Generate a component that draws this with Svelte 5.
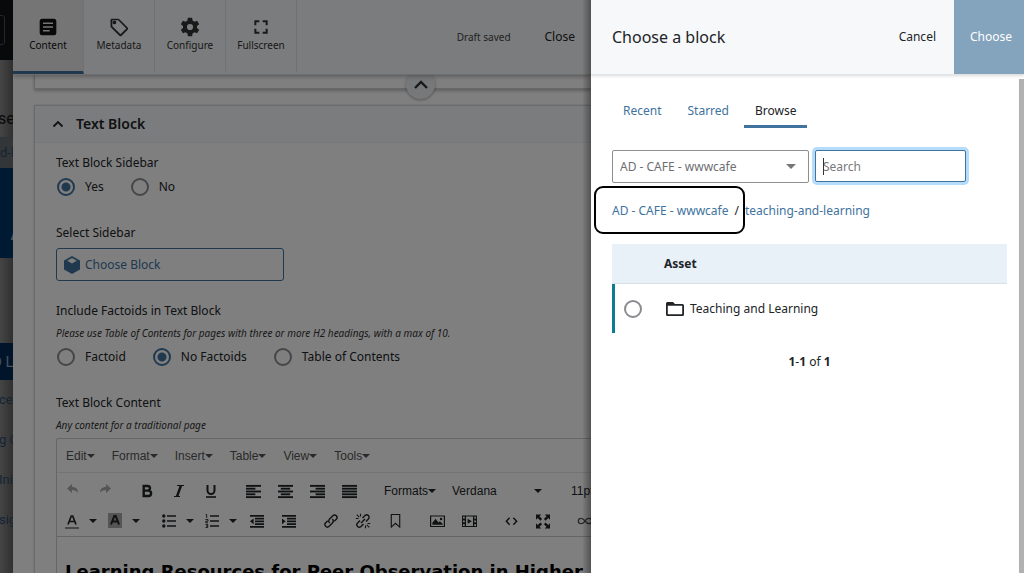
<script>
  const tabs = ['Content', 'Metadata', 'Configure', 'Fullscreen'];
  const menus = ['Edit', 'Format', 'Insert', 'Table', 'View', 'Tools'];
  const lines = {
    left: [16, 10, 16, 10, 16],
    center: [16, 10, 16, 10, 16],
    right: [16, 10, 16, 10, 16],
    full: [16, 16, 16, 16, 16]
  };
  const start = (kind, w) => (kind === 'right' ? 16 - w : kind === 'center' ? (16 - w) / 2 : 0);
  let sidebar = $state('Yes');
  let factoid = $state('No Factoids');
  let search = $state('');
</script>

<div class="app">
  <aside class="site">
    <div class="dark"><span></span></div>
    <div class="title">se</div>
    <div class="path">d-l</div>
    <div class="hero">A</div>
    <div class="space"></div>
    <div class="current">D L</div>
    <div class="link">ces</div>
    <div class="link">g C</div>
    <div class="link">Ini</div>
    <div class="link">sig</div>
  </aside>

  <main class="editor">
    <header class="bar">
      <nav class="tabs">
        {#each tabs as tab, i}
          <button class="tab" class:active={i === 0}>
            <svg width="20" height="20" viewBox="0 0 24 24" fill="currentColor" aria-hidden="true">
              {#if i === 0}
                <path d="M19 2H5a3 3 0 0 0-3 3v14a3 3 0 0 0 3 3h14a3 3 0 0 0 3-3V5a3 3 0 0 0-3-3zm-5 15.500H6v-2h8zm4-4.500H6v-2h12zm0-4.500H6v-2h12z" />
              {:else if i === 1}
                <path d="M22.400 12.600l-10-10A2 2 0 0 0 11 2H3.500A1.700 1.700 0 0 0 1.800 3.700V11c0 .6.200 1.100.6 1.500l10 10a2 2 0 0 0 2.800 0l7.200-7.100a2 2 0 0 0 0-2.800zM13.800 20.800L4 11V4h7l9.800 9.800z" />
                <circle cx="6.500" cy="6.500" r="2.200" />
              {:else if i === 2}
                <path fill-rule="evenodd" d="M9.500 1h5l.6 3.300 2.200 1.300 3.200-1.200 2.500 4.300-2.600 2.200v2.200l2.600 2.200-2.500 4.300-3.200-1.200-2.200 1.300-.6 3.300h-5l-.6-3.300-2.200-1.300-3.200 1.200L1 15.300l2.600-2.200v-2.200L1 8.700l2.500-4.300 3.200 1.200 2.200-1.300zM12 8.300a3.700 3.700 0 1 0 0 7.400 3.700 3.700 0 0 0 0-7.400z" />
              {:else}
                <path d="M4 4h6v2.400H6.400V10H4zM14 4h6v6h-2.400V6.400H14zM4 14h2.400v3.600H10V20H4zM17.600 14H20v6h-6v-2.400h3.600z" />
              {/if}
            </svg>
            {tab}
          </button>
        {/each}
      </nav>
      <span class="status">Draft saved</span>
      <button class="close">Close</button>
    </header>

    <div class="body">
      <div class="previous"></div>
      <button class="up" aria-label="Scroll up">
        <svg width="16" height="16" viewBox="0 0 16 16" fill="none" stroke="currentColor" stroke-width="2.400"><path d="M2 11l6-6 6 6" /></svg>
      </button>

      <section class="card">
        <h2>
          <svg width="12" height="12" viewBox="0 0 12 12" fill="none" stroke="currentColor" stroke-width="1.800" aria-hidden="true"><path d="M1.500 8.500L6 4l4.500 4.500" /></svg>
          Text Block
        </h2>
        <div class="fields">
          <fieldset>
            <legend>Text Block Sidebar</legend>
            <div class="radios">
              {#each ['Yes', 'No'] as option}
                <label><input type="radio" name="sidebar" value={option} bind:group={sidebar} />{option}</label>
              {/each}
            </div>
          </fieldset>
          <div class="chooser-field">
            <label for="block">Select Sidebar</label>
            <button class="choose-block" id="block">
              <svg width="16" height="18" viewBox="0 0 16 18" fill="currentColor" aria-hidden="true"><path fill-rule="evenodd" d="M8 0l8 4.500v9L8 18l-8-4.500v-9zM8 2L3.200 4.700 8 7.400l4.800-2.700z" /></svg>
              Choose Block
            </button>
          </div>
          <fieldset>
            <legend>Include Factoids in Text Block</legend>
            <p class="help">Please use Table of Contents for pages with three or more H2 headings, with a max of 10.</p>
            <div class="radios">
              {#each ['Factoid', 'No Factoids', 'Table of Contents'] as option}
                <label><input type="radio" name="factoid" value={option} bind:group={factoid} />{option}</label>
              {/each}
            </div>
          </fieldset>
          <div>
            <div class="label">Text Block Content</div>
            <p class="help">Any content for a traditional page</p>
            <div class="rich">
              <div class="menus">
                {#each menus as menu}<button>{menu}<i class="caret"></i></button>{/each}
              </div>
              <div class="tools">
                <div class="row">
                  <button class="tool muted" aria-label="Undo"><svg width="12" height="14" viewBox="0 0 12 14" fill="currentColor"><path d="M5 0v3c4 0 6 2 6 6-1-2-3-3-6-3v3L0 4.500z" /></svg></button>
                  <button class="tool muted after" aria-label="Redo"><svg width="12" height="14" viewBox="0 0 12 14" fill="currentColor"><path d="M7 0v3C3 3 1 5 1 9c1-2 3-3 6-3v3l5-4.500z" /></svg></button>
                  <button class="tool" aria-label="Bold"><svg width="16" height="16" viewBox="0 0 16 16" fill="none" stroke="currentColor" stroke-width="2.400"><path d="M4.700 3h4a2.200 2.200 0 0 1 0 4.600h-4zM4.700 7.600h4.700a2.700 2.700 0 0 1 0 5.400H4.700z" /></svg></button>
                  <button class="tool" aria-label="Italic"><svg width="16" height="16" viewBox="0 0 16 16" fill="none" stroke="currentColor"><path d="M6 2.500h7M3 13.500h6" stroke-width="1.200" /><path d="M10 2.500L6 13.500" stroke-width="2.400" /></svg></button>
                  <button class="tool after" aria-label="Underline"><svg width="16" height="16" viewBox="0 0 16 16" fill="none" stroke="currentColor"><path d="M4.500 2v5.500a3.500 3.500 0 0 0 7 0V2" stroke-width="2" /><path d="M3 14h10" stroke-width="1.600" /></svg></button>
                  {#each Object.entries(lines) as [kind, widths]}
                    <button class="tool" class:after={kind === 'full'} aria-label="Align {kind}">
                      <svg width="15" height="15" viewBox="0 0 16 16" fill="currentColor">
                        {#each widths as w, i}<rect x={start(kind, w)} y={1 + i * 3} width={w} height="2" />{/each}
                      </svg>
                    </button>
                  {/each}
                  <button class="drop formats">Formats<i class="caret"></i></button>
                  <button class="drop family">Verdana<i class="caret"></i></button>
                  <button class="drop">11pt<i class="caret"></i></button>
                </div>
                <div class="row">
                  <button class="tool split" aria-label="Text colour"><svg width="14" height="16" viewBox="0 0 14 16" fill="none" stroke="currentColor"><path d="M3 11.500L6.300 3h1.400L11 11.500M4.300 8.500h5.400" stroke-width="1.700" /><path d="M0 15h14" /></svg><i class="caret"></i></button>
                  <button class="tool split back" aria-label="Background colour"><svg width="14" height="16" viewBox="0 0 14 16" fill="none" stroke="currentColor"><path fill="#aaa" stroke="none" d="M0 0h14v15H0z" /><path d="M3 11.500L6.300 3h1.400L11 11.500M4.300 8.500h5.400" stroke-width="2" /></svg><i class="caret"></i></button>
                  <button class="tool split" aria-label="Bullet list"><svg width="14" height="16" viewBox="0 0 14 16" fill="currentColor"><circle cx="1.800" cy="3" r="1.700" /><circle cx="1.800" cy="8" r="1.700" /><circle cx="1.800" cy="13" r="1.700" /><path d="M5 2.200h9v1.600H5zM5 7.200h9v1.600H5zM5 12.200h9v1.600H5z" /></svg><i class="caret"></i></button>
                  <button class="tool split last" aria-label="Numbered list"><svg width="14" height="16" viewBox="0 0 14 16" fill="none" stroke="currentColor"><path d="M5 3h9M5 8h9M5 13h9" stroke-width="1.600" /><path d="M.7 1.500h1V5M.5 6.500H3v1.700H.800v1.600H3M.5 11.500h2.200v3H.500M1 13h2" stroke-width=".9" /></svg><i class="caret"></i></button>
                  {#each [false, true] as inward}
                    <button class="tool" class:after={inward} aria-label={inward ? 'Increase indent' : 'Decrease indent'}>
                      <svg width="14" height="16" viewBox="0 0 14 16" fill="currentColor"><path d="M0 2h14v1.700H0zM5 4.800h9v1.700H5zM5 7.500h9v1.700H5zM5 10.200h9v1.700H5zM0 13h14v1.700H0z" /><path d={inward ? 'M0 5.500l3.600 2.800L0 11.200z' : 'M3.600 5.500L0 8.300l3.600 2.900z'} /></svg>
                    </button>
                  {/each}
                  <button class="tool" aria-label="Insert link"><svg width="16" height="16" viewBox="0 0 16 16" fill="none" stroke="currentColor" stroke-width="1.400"><path d="M6.700 9.900a2.600 2.600 0 0 1-.3-3.700l3.400-3.500a2.400 2.400 0 0 1 3.500 3.500l-2.100 2.100M9.300 6.100a2.600 2.600 0 0 1 .3 3.700l-3.400 3.500a2.400 2.400 0 0 1-3.500-3.500l2.100-2.100" /></svg></button>
                  <button class="tool" aria-label="Remove link"><svg width="16" height="16" viewBox="0 0 16 16" fill="none" stroke="currentColor" stroke-width="1.400"><path d="M7.500 5l2.500-2.400a2.400 2.400 0 0 1 3.400 3.400L11 8.500M8.500 11L6 13.400a2.400 2.400 0 0 1-3.400-3.400L5 7.500M6 10l4-4" /><path d="M5.500.8v2.700M.8 5.500h2.700M1.700 1.700l2.500 2.500M10.500 12.500v2.700M12.500 10.500h2.700M11.800 11.800l2.500 2.500" stroke-width="1.100" /></svg></button>
                  <button class="tool after" aria-label="Anchor"><svg width="15" height="16" viewBox="0 0 16 16" fill="none" stroke="currentColor" stroke-width="1.200"><path d="M3.500 1.100h9v13.400L8 10.500l-4.500 4z" /></svg></button>
                  <button class="tool" aria-label="Image"><svg width="15" height="16" viewBox="0 0 16 16" fill="currentColor"><path fill-rule="evenodd" d="M0 2h16v12.500H0zM1.300 3.300v9.900h13.400V3.300z" /><path d="M2.500 12V9.800L6 5.500l3 4 1.500-1.300L13.500 11v1z" /><circle cx="11.800" cy="5.800" r="1.300" /></svg></button>
                  <button class="tool after" aria-label="Media"><svg width="15" height="16" viewBox="0 0 16 16" fill="currentColor"><path fill-rule="evenodd" d="M0 2h16v12.500H0zM4.300 3.300v9.900h7.400V3.300zM1 3.500v1.700h2V3.500zm0 4v1.700h2V7.500zm0 4v1.700h2v-1.700zm12-8v1.700h2V3.500zm0 4v1.700h2V7.500zm0 4v1.700h2v-1.700z" /><path d="M6 5.500l4.500 2.800L6 11z" /></svg></button>
                  <button class="tool" aria-label="Source code"><svg width="15" height="16" viewBox="0 0 16 16" fill="none" stroke="currentColor" stroke-width="1.600"><path d="M6 4.500L2.500 8.200 6 12M10 4.500l3.500 3.700L10 12" /></svg></button>
                  <button class="tool after" aria-label="Fullscreen"><svg width="14" height="15" viewBox="0 0 16 16" fill="currentColor"><path d="M0 0h6L4 2l3 3-2 2-3-3-2 2zM16 0v6l-2-2-3 3-2-2 3-3-2-2zM0 16v-6l2 2 3-3 2 2-3 3 2 2zM16 16h-6l2-2-3-3 2-2 3 3 2-2z" /></svg></button>
                  <button class="tool" aria-label="Internal link"><svg width="16" height="16" viewBox="0 0 18 16" fill="none" stroke="#555" stroke-width="1.500"><path d="M9 8C7.500 6 6.500 5 4.500 5a3 3 0 0 0 0 6C6.500 11 8 10 9 8s2.500-3 4.500-3a3 3 0 0 1 0 6c-2 0-3-1-4.500-3z" /></svg></button>
                </div>
              </div>
              <h1>Learning Resources for Peer Observation in Higher</h1>
            </div>
          </div>
        </div>
      </section>
    </div>
  </main>

  <section class="panel" aria-label="Choose a block">
    <header class="panel-head">
      <h2>Choose a block</h2>
      <button class="cancel">Cancel</button>
      <button class="choose">Choose</button>
    </header>
    <div class="panel-body">
      <nav class="panel-tabs">
        <button>Recent</button>
        <button>Starred</button>
        <button class="active">Browse</button>
      </nav>
      <div class="filters">
        <div class="select">
          <select aria-label="Site"><option>AD - CAFE - wwwcafe</option></select>
        </div>
        <div class="search"><input type="text" placeholder="Search" aria-label="Search" bind:value={search} /></div>
      </div>
      <nav class="crumbs">
        <span class="marked"><a href="#site">AD - CAFE - wwwcafe</a></span><span class="slash">/</span><a href="#folder">teaching-and-learning</a>
      </nav>
      <table>
        <thead><tr><th class="pick"></th><th>Asset</th></tr></thead>
        <tbody>
          <tr>
            <td class="pick"><input type="radio" id="asset" name="asset" /></td>
            <td>
              <label for="asset">
                <svg width="18" height="16" viewBox="0 0 18 16" aria-hidden="true"><path fill="currentColor" fill-rule="evenodd" d="M1.500 1H7l2 2h7.500A1.500 1.500 0 0 1 18 4.500v9a1.500 1.500 0 0 1-1.500 1.500h-15A1.500 1.500 0 0 1 0 13.500v-11A1.500 1.500 0 0 1 1.500 1zm.3 3.800v8.400h14.400V4.800z" /></svg>
                Teaching and Learning
              </label>
            </td>
          </tr>
        </tbody>
      </table>
      <p class="count"><b>1</b>-<b>1</b> of <b>1</b></p>
    </div>
    <div class="thumb"></div>
  </section>
</div>

<style>
  :global(body) { margin: 0; }
  * { box-sizing: border-box; }
  .app {
    display: grid;
    grid-template-columns: 13px minmax(0, 1fr) 433px;
    height: 100vh;
    overflow: hidden;
    font: 12px/22px "Noto Sans", sans-serif;
    color: #212427;
  }
  button { font: inherit; color: inherit; background: none; border: 0; padding: 0; white-space: nowrap; }
  h1, h2, p { margin: 0; }
  a { color: #40739e; text-decoration: none; }
  svg { flex: none; display: block; }

  .site {
    display: flex;
    flex-direction: column;
    overflow: hidden;
    background: linear-gradient(90deg, #454545, #303030);
    color: #142434;
    font-family: Roboto, sans-serif;
    font-size: 13px;
  }
  .site > div { display: flex; align-items: center; flex: none; white-space: nowrap; }
  .site .dark { height: 60px; justify-content: flex-end; background: #07090b; }
  .dark span { width: 24px; height: 30px; margin-right: 8px; border: 1px solid #24272a; border-radius: 3px; flex: none; }
  .site .title { height: 78px; margin-left: -2px; padding-top: 40px; color: #090909; font-size: 16px; border-bottom: 1px solid #303436; }
  .site .path { height: 30px; background: #333638; }
  .site .hero { height: 90px; padding: 40px 0 0 10px; background: #001a33; color: #4b5055; font: bold 22px "Liberation Sans", sans-serif; }
  .site .space { height: 85px; }
  .site .current { height: 37px; margin-left: -8px; background: #00152a; color: #46525e; font-size: 15px; }
  .site .link { height: 40px; margin-left: -1px; }

  .editor { position: relative; overflow: hidden; background: #fff; }
  .editor::after {
    content: "";
    position: absolute;
    inset: 0;
    z-index: 3;
    background: linear-gradient(270deg, rgba(0, 0, 0, 0.35), transparent 9px), rgba(0, 0, 0, 0.5);
    pointer-events: none;
  }
  .bar {
    position: relative;
    z-index: 2;
    display: flex;
    align-items: center;
    height: 75px;
    background: #f7f8fa;
    border-bottom: 1px solid #d9dcdf;
    box-shadow: 0 1px 5px rgba(0, 0, 0, 0.35);
  }
  .tabs { display: flex; align-self: stretch; margin-right: auto; }
  .tab {
    display: flex;
    flex-direction: column;
    align-items: center;
    width: 71px;
    padding-top: 17px;
    border-right: 1px solid #dfe2e5;
    border-bottom: 3px solid transparent;
    font-size: 10px;
    line-height: 16px;
    color: #333;
  }
  .tab.active { background: #ebebec; border-bottom-color: #40739e; color: #111; }
  .status { font-size: 10px; color: #444; }
  .close { margin: 0 16px 0 34px; }

  .body { position: relative; padding-left: 21px; }
  .previous { height: 14px; border: 1px solid #ccd0d3; border-top: 0; border-right: 0; box-shadow: 0 2px 3px rgba(0, 0, 0, 0.25); }
  .up {
    position: absolute;
    left: 68%;
    top: -5px;
    display: grid;
    place-items: center;
    width: 29px;
    height: 29px;
    border-radius: 50%;
    background: #eef0f2;
    box-shadow: 0 1px 3px rgba(0, 0, 0, 0.35);
    color: #333;
  }
  .card { margin-top: 16px; border: 1px solid #d3d6d9; border-right: 0; box-shadow: 0 0 2px rgba(0, 0, 0, 0.2); }
  .card h2 {
    display: flex;
    align-items: center;
    gap: 12px;
    height: 37px;
    padding-left: 17px;
    background: #f7f8fa;
    border-bottom: 1px solid #eceeef;
    font-size: 14px;
    font-weight: 600;
  }
  .fields { display: flex; flex-direction: column; gap: 22px; padding: 9px 0 0 21px; }
  fieldset { border: 0; margin: 0; padding: 0; min-width: 0; }
  legend { padding: 0; }
  .radios { display: flex; gap: 26px; line-height: 26px; }
  .radios label { display: flex; align-items: center; gap: 10px; }
  input[type="radio"] {
    appearance: none;
    width: 18px;
    height: 18px;
    margin: 0;
    border: 2px solid #8a8c8f;
    border-radius: 50%;
    background: transparent;
  }
  .radios input[type="radio"] { margin-left: 1px; }
  input[type="radio"]:checked { border-color: #40739e; background: radial-gradient(circle, #40739e 4px, transparent 5px); }
  .chooser-field { display: flex; flex-direction: column; align-items: flex-start; gap: 4px; margin-bottom: -3px; }
  .choose-block {
    display: flex;
    align-items: center;
    gap: 5px;
    width: 228px;
    height: 33px;
    padding-left: 7px;
    border: 1px solid #40739e;
    border-radius: 3px;
    color: #40739e;
  }
  .help { font-size: 10px; font-style: italic; color: #333; white-space: nowrap; }
  .rich { margin-top: 2px; border: 1px solid #c9cfd4; border-right: 0; border-radius: 3px 0 0 0; font-family: "Liberation Sans", Arial, sans-serif; white-space: nowrap; }
  .menus { display: flex; gap: 17px; height: 34px; padding-left: 9px; border-bottom: 1px solid #e6e8ea; font-size: 12px; color: #555; }
  .caret { display: inline-block; vertical-align: 2px; border: 4px solid transparent; border-top-color: currentColor; border-bottom: 0; }
  .tools { display: flex; flex-direction: column; height: 64px; padding: 3px 0 0 8px; border-bottom: 1px solid #c5c9cc; }
  .row { display: flex; align-items: center; height: 31px; }
  .tool { display: flex; align-items: center; justify-content: center; flex: none; gap: 10px; width: 32px; height: 28px; }
  .row:first-child .tool:first-child { margin-left: -8px; }
  .muted { color: #aaa; }
  .tool.after { margin-right: 10px; }
  .tool.split { width: 33px; justify-content: flex-start; margin-right: 10px; }
  .tool.split.back { margin-right: 21px; }
  .tool.split.last { margin-right: 3px; }
  .drop { font-size: 12px; flex: none; }
  .formats { margin-left: 9px; }
  .family { display: flex; align-items: center; justify-content: space-between; width: 90px; margin: 0 29px 0 16px; }
  .rich h1 { padding: 23px 0 0 8px; font: bold 18px/24px "DejaVu Sans", Verdana, sans-serif; color: #000; }

  .panel { position: relative; background: #fff; overflow: hidden; }
  .panel-head {
    display: flex;
    align-items: center;
    height: 75px;
    padding-left: 21px;
    background: #f7f8fa;
    border-bottom: 1px solid #dfe3e6;
    box-shadow: 0 1px 3px rgba(0, 0, 0, 0.15);
  }
  .panel-head h2 { margin-right: auto; font-size: 16px; font-weight: 400; }
  .cancel { padding: 0 18px; }
  .choose { width: 70px; padding-left: 4px; align-self: stretch; background: #84a3bd; color: #fff; }
  .panel-body { padding: 25px 17px 0 21px; }
  .panel-tabs { display: flex; gap: 4px; }
  .panel-tabs button { height: 28px; padding: 0 11px 3px; color: #40739e; border-bottom: 3px solid transparent; }
  .panel-tabs .active { color: #212427; border-color: #40739e; }
  .filters { display: flex; gap: 6px; margin-top: 22px; }
  .select { position: relative; width: 197px; }
  .select::after {
    content: "";
    position: absolute;
    right: 13px;
    top: 14px;
    border: 5px solid transparent;
    border-top-color: #777;
    border-bottom: 0;
    pointer-events: none;
  }
  select, .search input {
    display: block;
    appearance: none;
    width: 100%;
    height: 33px;
    padding: 0 7px;
    border: 1px solid #8c8e91;
    border-radius: 2px;
    background: #fff;
    font: inherit;
    color: #6d6f72;
  }
  .search { position: relative; width: 151px; }
  .search input { height: 32px; border-color: #40739e; box-shadow: 0 0 0 3px #b6dcfb; outline: 0; }
  .search input::placeholder { color: #77797c; opacity: 1; }
  .search::after { content: ""; position: absolute; left: 8px; top: 8px; width: 1px; height: 17px; background: #333; }
  .crumbs { display: flex; margin-top: 17px; white-space: nowrap; }
  .marked { position: relative; }
  .marked::after { content: ""; position: absolute; inset: -14px -17px -12px -18px; border: 2px solid #000; border-radius: 9px; pointer-events: none; }
  .slash { padding: 0 6px; }
  table { width: 100%; margin-top: 22px; border-collapse: separate; border-spacing: 0; }
  th { height: 40px; padding: 0; text-align: left; background: #e8f0f8; border-bottom: 1px solid #d8e0e8; }
  td { height: 49px; padding: 0; }
  .pick { width: 52px; }
  td.pick { border-left: 3px solid #0e7c90; padding-left: 9px; }
  .pick input { display: block; }
  td label { display: flex; align-items: center; gap: 6px; padding-left: 2px; }
  .count { margin-top: 18px; text-align: center; }
  .thumb { position: absolute; right: 0; top: 79px; bottom: 0; width: 5px; background: #b1b1b1; }
</style>
